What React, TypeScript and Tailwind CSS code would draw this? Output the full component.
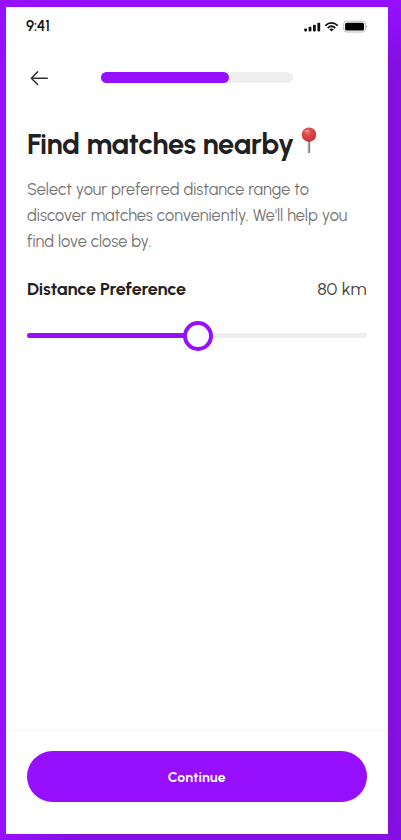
function StatusIcons() {
  return (
    <svg width="64" height="14" viewBox="0 0 64 14" fill="none">
      <g fill="#111">
        <rect x="0.2" y="8.4" width="2.8" height="3" rx="0.8" />
        <rect x="4.6" y="6.7" width="2.8" height="4.7" rx="0.8" />
        <rect x="9" y="4.7" width="2.8" height="6.7" rx="0.8" />
        <rect x="13.4" y="2.8" width="2.8" height="8.6" rx="0.8" />
      </g>
      <g stroke="#111" strokeWidth="1.8">
        <path d="M21.3 5.6 Q27.5 0.2 33.7 5.6" />
        <path d="M23.7 8 Q27.5 4.6 31.3 8" />
      </g>
      <path d="M25.4 9.4 Q27.5 7.8 29.6 9.4 L27.5 11.5Z" fill="#111" />
      <rect x="39.7" y="1.2" width="21.8" height="10.8" rx="3" stroke="#bdbdbd" />
      <rect x="41.1" y="2.7" width="18.9" height="7.8" rx="1.5" fill="#000" />
      <path d="M62.4 5 Q64 6.6 62.4 8.2Z" fill="#aaa" />
    </svg>
  );
}

function Pin() {
  return (
    <svg width="16" height="28" viewBox="0 0 16 28" className="mb-[6px] ml-[7px] shrink-0">
      <defs>
        <radialGradient id="pin-head" cx="40%" cy="30%" r="70%">
          <stop offset="0" stopColor="#e9716c" />
          <stop offset="0.45" stopColor="#dc4547" />
          <stop offset="1" stopColor="#c5363a" />
        </radialGradient>
      </defs>
      <rect x="6.8" y="12" width="2.4" height="14" rx="0.8" fill="#858585" />
      <rect x="7.2" y="13" width="0.8" height="12" fill="#aaa" />
      <circle cx="8" cy="7.7" r="7.2" fill="url(#pin-head)" />
      <ellipse cx="6" cy="4" rx="2.4" ry="1.2" fill="#f39b94" opacity="0.7" />
    </svg>
  );
}

export default function App() {
  return (
    <div className="h-[840px] w-[401px] overflow-hidden bg-[#9610ff] pt-[7px] pl-[6px] font-['Urbanist','Lato',sans-serif]">
      <main className="flex h-[827px] w-[382px] flex-col bg-white text-[#212121] shadow-[40px_30px_40px_#8210de]">
        <div className="flex h-[40px] items-center justify-between pr-[20px] pl-[20px]">
          <span className="mb-[2px] text-[15px] leading-[20px] font-semibold tracking-[-0.2px] text-[#111]">9:41</span>
          <StatusIcons />
        </div>
        <header className="flex h-[61px] items-center pl-[24px]">
          <svg width="20" height="18" viewBox="0 0 20 18" fill="none" stroke="#333" strokeWidth="1.5" strokeLinecap="round" strokeLinejoin="round">
            <path d="M17.3 9.2H1.4M7.6 2.9L1.3 9.2l6.3 6.3" />
          </svg>
          <div className="ml-[51px] h-[11px] w-[192px] rounded-full bg-[#eee]">
            <div className="h-full w-2/3 rounded-full bg-[#9610ff]" />
          </div>
        </header>
        <section className="flex flex-1 flex-col pr-[21.5px] pl-[21px]">
          <h1 className="mt-[9px] flex h-[54px] items-center text-[29px] font-bold whitespace-nowrap">
            <span className="tracking-[-0.32px]">Find matches nearby</span>
            <Pin />
          </h1>
          <p className="mt-[6px] text-[16.3px] leading-[26px] tracking-[0.04px] whitespace-nowrap text-[#757575]">
            <span className="block">Select your preferred distance range to</span>
            <span className="block">discover matches conveniently. We'll help you</span>
            <span className="block">find love close by.</span>
          </p>
          <div className="mt-[22px] flex h-[24px] items-center justify-between text-[18px]">
            <h2 className="font-bold tracking-[-0.12px]">Distance Preference</h2>
            <span className="text-[#424242]">80 km</span>
          </div>
          <div className="relative mt-[32px] h-[5px] rounded-full bg-[#eee]">
            <div className="h-full w-1/2 rounded-full bg-[#9610ff]" />
            <div className="absolute top-1/2 left-1/2 ml-[0.75px] size-[30px] -translate-1/2 rounded-full border-4 border-[#9610ff] bg-white" />
          </div>
        </section>
        <footer className="h-[104px] border-t border-[#f7f7f7] pt-[20px] pr-[21.5px] pl-[21px]">
          <button className="flex h-[51px] w-full items-center justify-center rounded-full bg-[#9610ff] pt-[2px] text-[14px] font-bold tracking-[0.25px] text-white">Continue</button>
        </footer>
      </main>
    </div>
  );
}
